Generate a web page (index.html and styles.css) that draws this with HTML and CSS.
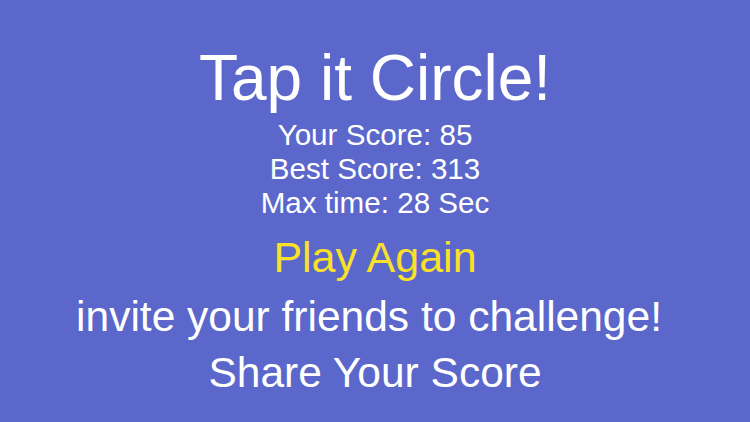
FILE: index.html
```html
<!DOCTYPE html>
<html lang="en">
<head>
    <meta charset="UTF-8">
    <meta name="viewport" content="width=device-width, initial-scale=1.0">
    <title>Tap it Circle!</title>
    <link rel="stylesheet" href="styles.css">
</head>
<body>
    <div class="game-over">
        <h1 class="title">Tap it Circle!</h1>
        <div class="stats">
            <div>Your Score: <span id="score">85</span></div>
            <div>Best Score: <span id="best">313</span></div>
            <div>Max time: <span id="maxTime">28</span> Sec</div>
        </div>
        <a class="play-again" href="#">Play Again</a>
        <div class="invite">invite your friends to challenge!</div>
        <a class="share" href="#">Share Your Score</a>
    </div>
</body>
</html>
```

FILE: styles.css
```css
html, body {
    margin: 0;
    height: 100%;
}

body {
    font-family: "Liberation Sans", Arial, sans-serif;
    background-color: #5b67cb;
    color: #ffffff;
    overflow: hidden;
}

.game-over {
    display: flex;
    flex-direction: column;
    align-items: center;
    padding-top: 42px;
}

.title {
    margin: 0;
    font-size: 64px;
    font-weight: normal;
    line-height: 72px;
}

.stats {
    margin-top: 4px;
    font-size: 29.6px;
    line-height: 34px;
    text-align: center;
}

.play-again,
.invite,
.share {
    font-size: 42.5px;
    line-height: 56px;
    text-decoration: none;
    color: #ffffff;
}

.play-again {
    margin-top: 9px;
    font-size: 43px;
    color: #f9e12a;
}

/* the invite line sits a little left of centre */
.invite {
    margin-top: 4px;
    padding-right: 12px;
}
```
